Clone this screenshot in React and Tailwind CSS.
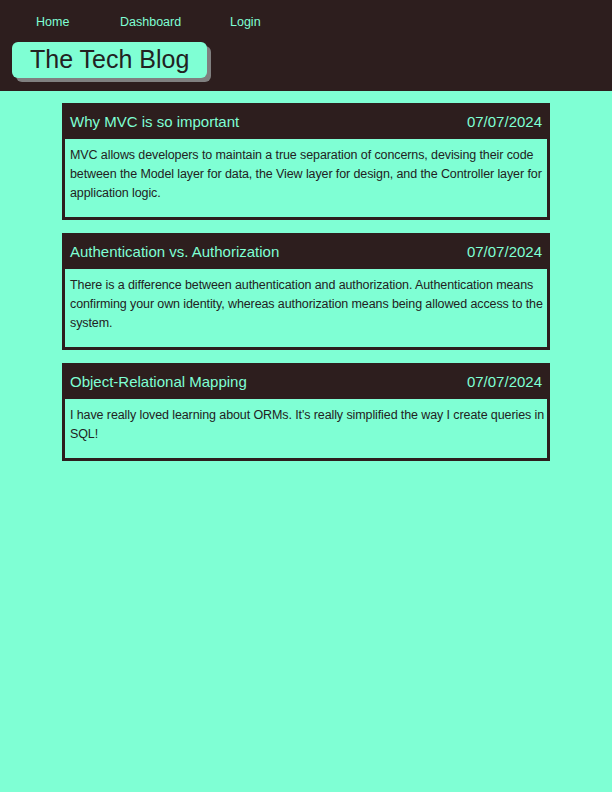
import React from 'react'

const posts = [
  {
    title: 'Why MVC is so important',
    date: '07/07/2024',
    body: 'MVC allows developers to maintain a true separation of concerns, devising their code between the Model layer for data, the View layer for design, and the Controller layer for application logic.',
  },
  {
    title: 'Authentication vs. Authorization',
    date: '07/07/2024',
    body: 'There is a difference between authentication and authorization. Authentication means confirming your own identity, whereas authorization means being allowed access to the system.',
  },
  {
    title: 'Object-Relational Mapping',
    date: '07/07/2024',
    body: "I have really loved learning about ORMs. It's really simplified the way I create queries in SQL!",
  },
]

const App = () => {
  return (
    <div className="min-h-[792px] bg-[#7fffd4] font-['Liberation_Sans',Arial,sans-serif]">
      <header className="bg-[#2d1e1e] h-[91px] px-3 pt-[14px]">
        <nav className="flex text-[12.5px] text-[#7fffd4] leading-[17px] pl-6">
          <a className="w-[84px]">Home</a>
          <a className="w-[110px]">Dashboard</a>
          <a>Login</a>
        </nav>
        <div className="mt-[11px] inline-block bg-[#7fffd4] rounded-md px-[18px] h-[36px] shadow-[4px_4px_0_#808080]">
          <h1 className="whitespace-nowrap text-[25px] leading-[34px] text-[#222]">The Tech Blog</h1>
        </div>
      </header>
      <main className="pt-3 flex flex-col gap-[13px] items-center">
        {posts.map((post) => (
          <div key={post.title} className="w-[488px] border-[3px] border-[#2d1e1e]">
            <div className="bg-[#2d1e1e] flex justify-between items-center h-[33px] px-[5px] pb-px text-[15px] text-[#7fffd4]">
              <h2>{post.title}</h2>
              <span>{post.date}</span>
            </div>
            <p className="pl-[5px] pr-0 pt-[7px] pb-[14px] text-[12.5px] tracking-[-0.1px] leading-[19px] text-[#222]">{post.body}</p>
          </div>
        ))}
      </main>
    </div>
  )
}

export default App
